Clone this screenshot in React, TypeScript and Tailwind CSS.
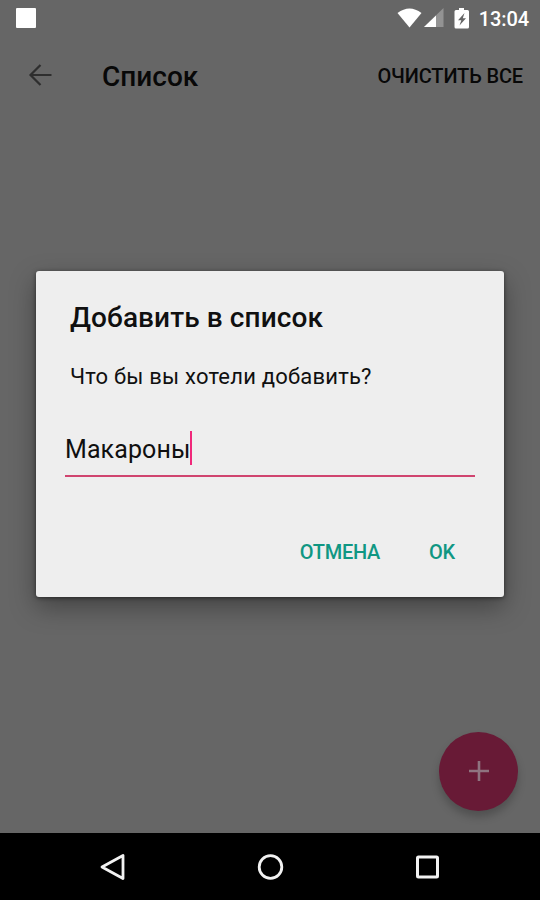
import { useState } from "react";

const StatusBar = () => {
  return (
    <div className="flex h-[38px] items-center justify-between pl-4 pr-[11px]">
      <div className="mb-[3px] h-5 w-5 rounded-[1px] bg-white" />
      <div className="flex items-center text-white">
        {/* Wifi */}
        <svg className="mb-px h-[21px] w-[25px]" viewBox="0 0 25 21">
          <path d="M0.500 5Q12.500 -4 24.500 5L12.500 19.500Z" fill="#fff" />
        </svg>
        {/* Signal */}
        <svg className="mb-px ml-px h-[21px] w-[22px]" viewBox="0 0 22 21">
          <path d="M20.500 0V19H1Z" fill="#939393" />
          <path d="M13 7.500V19H1Z" fill="#fff" />
        </svg>
        {/* Battery */}
        <svg className="mb-[2px] ml-[9px] h-[21px] w-[16px]" viewBox="0 0 16 21">
          <path
            d="M5 0H10V2H13.500Q15 2 15 3.500V19Q15 20.500 13.500 20.500H2Q0.500 20.500 0.500 19V3.500Q0.500 2 2 2H5Z"
            fill="#fff"
          />
          <path d="M10.500 5L4 12.300H7.300L5.500 17.500L12 10.200H8.800Z" fill="#666" />
        </svg>
        <span className="ml-[9px] text-[20px] leading-6 font-medium tracking-[-0.1px]">
          13:04
        </span>
      </div>
    </div>
  );
};

const AppBar = () => {
  return (
    <div className="flex h-[77px] items-center pl-7 pr-[17px] text-[#080808]">
      <svg className="mb-[3px] h-6 w-6" viewBox="0 0 24 24" fill="none">
        <path
          d="M12.500 2L2.500 12L12.500 22M2.500 12H23.500"
          stroke="#2e2e2e"
          strokeWidth="2.200"
        />
      </svg>
      <h1 className="ml-[50px] text-[28px] font-medium">Список</h1>
      <button className="mb-px ml-auto text-[20px] font-medium tracking-[-0.15px]">
        ОЧИСТИТЬ ВСЕ
      </button>
    </div>
  );
};

const AddDialog = () => {
  const [item] = useState("Макароны");

  return (
    <div className="absolute top-[271px] left-9 flex h-[326px] w-[468px] flex-col rounded-[3px] bg-[#eeeeee] text-[#101010] shadow-[0_10px_26px_rgba(0,0,0,0.35),0_1px_4px_rgba(0,0,0,0.5)]">
      <h2 className="mt-[31px] ml-[34px] text-[28px] leading-8 font-medium tracking-[0.1px]">
        Добавить в список
      </h2>
      <p className="mt-[29px] ml-[34px] text-[22px] leading-7 tracking-[0.2px]">
        Что бы вы хотели добавить?
      </p>
      <div className="mx-[29px] mt-[40px] flex h-[46px] border-b-2 border-[#d0446f]">
        <span className="pt-px text-[25px] leading-9 tracking-[0.1px]">{item}</span>
        <span className="h-[34px] w-[2px] bg-[#f0287a]" />
      </div>
      <div className="mt-[61px] flex justify-end gap-[49px] pr-[49px] text-[20px] leading-7 font-medium tracking-[-0.25px] text-[#109783]">
        <button>ОТМЕНА</button>
        <button>OK</button>
      </div>
    </div>
  );
};

const NavBar = () => {
  return (
    <div className="flex h-[67px] items-center justify-center gap-[129px] bg-black">
      <svg className="h-7 w-7" viewBox="0 0 28 28" fill="none">
        <path
          d="M24 2.500V25.500L3 14Z"
          stroke="#f2f2f2"
          strokeWidth="2.800"
          strokeLinejoin="round"
        />
      </svg>
      <svg className="h-7 w-7" viewBox="0 0 28 28" fill="none">
        <circle cx="14.500" cy="14" r="11.300" stroke="#f2f2f2" strokeWidth="2.800" />
      </svg>
      <svg className="h-7 w-7" viewBox="0 0 28 28" fill="none">
        <rect
          x="4.500"
          y="4"
          width="20"
          height="20"
          rx="1"
          stroke="#f2f2f2"
          strokeWidth="3"
        />
      </svg>
    </div>
  );
};

const App = () => {
  return (
    <div className="relative flex h-[900px] w-[540px] flex-col overflow-hidden bg-[#666666] font-[Roboto,sans-serif]">
      <StatusBar />
      <AppBar />
      <div className="flex-1" />
      <button className="absolute top-[732px] left-[439px] flex h-[79px] w-[79px] items-center justify-center rounded-full bg-[#681a36] pb-px shadow-[0_6px_9px_rgba(0,0,0,0.22)]">
        <svg className="h-5 w-5" viewBox="0 0 20 20">
          <path d="M10 0V20M0 10H20" stroke="#8f7480" strokeWidth="2.600" />
        </svg>
      </button>
      <NavBar />
      <AddDialog />
    </div>
  );
};

export default App;
